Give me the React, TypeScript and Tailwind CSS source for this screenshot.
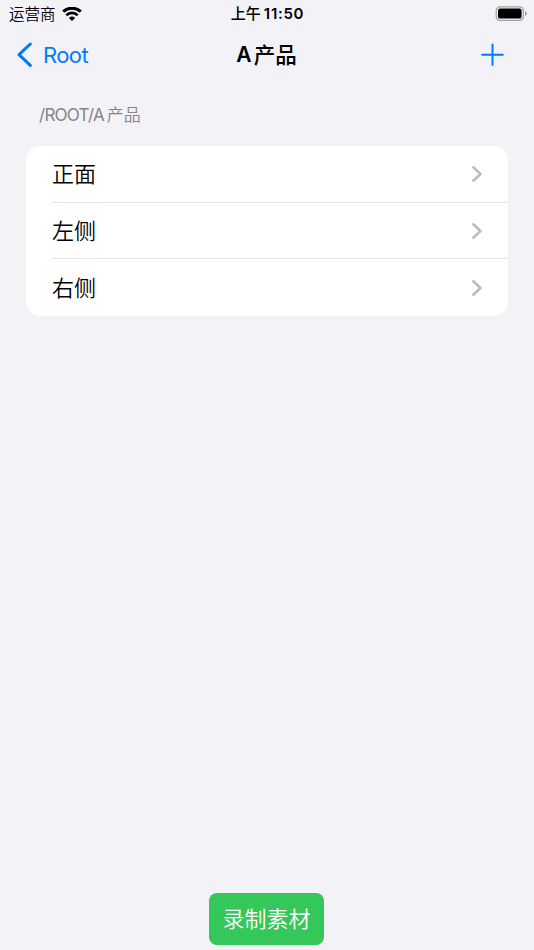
import React from "react";

const items = ["正面", "左侧", "右侧"];

const WifiIcon: React.FC = () => (
  <svg width="20" height="15" viewBox="0 0 20 15" fill="none">
    <path d="M1.2 4.7 A12.8 12.8 0 0 1 18.8 4.7" stroke="#000" strokeWidth="3" />
    <path d="M4.3 8.2 A8.2 8.2 0 0 1 15.7 8.2" stroke="#000" strokeWidth="2.7" />
    <path d="M10 14.1 L6.9 11 A4.5 4.5 0 0 1 13.1 11 Z" fill="#000" />
  </svg>
);

const BatteryIcon: React.FC = () => (
  <svg width="32" height="16" viewBox="0 0 32 16" fill="none">
    <rect x="1.2" y="0.8" width="27.2" height="13.6" rx="4" stroke="#a0a0a3" strokeWidth="1.2" />
    <rect x="3" y="2.6" width="23.6" height="10" rx="2.2" fill="#000" />
    <path d="M30 5.2 C31.3 5.8 31.9 6.6 31.9 7.6 C31.9 8.6 31.3 9.4 30 10 Z" fill="#a0a0a3" />
  </svg>
);

const App: React.FC = () => {
  return (
    <div className="flex flex-col w-full h-[950px] bg-[#f2f2f7] text-black font-['Inter','Noto_Sans_CJK_SC',sans-serif]">
      {/* Status bar */}
      <div className="grid grid-cols-3 items-center h-7 shrink-0 pl-[9px] pr-[7px]">
        <div className="flex items-center gap-1.5">
          <span className="pt-0.5 text-[15.5px] leading-[26px] font-[350]">运营商</span>
          <WifiIcon />
        </div>
        <div className="flex items-center justify-center gap-[3px] pr-px font-semibold text-[15px] leading-7">
          <span className="font-medium">上午</span>
          <span className="tracking-[0.7px]">11:50</span>
        </div>
        <div className="flex justify-end">
          <BatteryIcon />
        </div>
      </div>

      {/* Navigation bar */}
      <div className="grid grid-cols-3 items-center h-[54px] shrink-0 pl-4 pr-[29px]">
        <button className="flex items-center gap-[11px] text-[#007aff] text-[22px] leading-7">
          <svg width="16" height="26" viewBox="0 0 16 26" fill="none">
            <path d="M14.3 2 L3 12.7 L14.3 23.4" stroke="#007aff" strokeWidth="3" strokeLinecap="round" strokeLinejoin="round" />
          </svg>
          <span className="tracking-[-0.6px]">Root</span>
        </button>
        <h1 className="flex items-center justify-center gap-[2px] pl-3 text-[21px] leading-7 font-semibold whitespace-nowrap">
          <span>A</span>
          <span className="text-[21.5px] font-medium">产品</span>
        </h1>
        <button className="flex justify-end">
          <svg width="24" height="24" viewBox="0 0 24 24" fill="none">
            <path d="M11.5 1.5 V22.1 M1.2 11.8 H21.8" stroke="#007aff" strokeWidth="2" strokeLinecap="round" />
          </svg>
        </button>
      </div>

      <main className="flex flex-col flex-1 px-[26px]">
        <div className="flex items-center gap-[3px] h-16 pl-[13px] pt-[3px] text-[17px] text-[#85858b]">
          <span className="tracking-[-0.75px]">/ROOT/A</span>
          <span className="font-[350]">产品</span>
        </div>

        <ul className="rounded-[14px] bg-white overflow-hidden">
          {items.map((item, index) => (
            <li key={item} className="pl-[26px]">
              <div
                className={`flex items-center justify-between pr-[25px] text-[22px] font-[350] ${
                  index < items.length - 1 ? "h-[56.7px] border-b border-[#e4e4e6]" : "h-[56.6px]"
                }`}
              >
                <span className="pt-px">{item}</span>
                <svg width="12" height="18" viewBox="0 0 12 18" fill="none">
                  <path d="M2.3 2.3 L9.5 9 L2.3 15.7" stroke="#bcbcc0" strokeWidth="2.6" strokeLinecap="round" strokeLinejoin="round" />
                </svg>
              </div>
            </li>
          ))}
        </ul>
      </main>

      <div className="flex justify-center pr-px pb-[5.5px]">
        <button className="w-[115px] h-[52px] pt-px rounded-[8px] bg-[#34c759] text-white text-[22px] font-[350]">
          录制素材
        </button>
      </div>
    </div>
  );
};

export default App;
